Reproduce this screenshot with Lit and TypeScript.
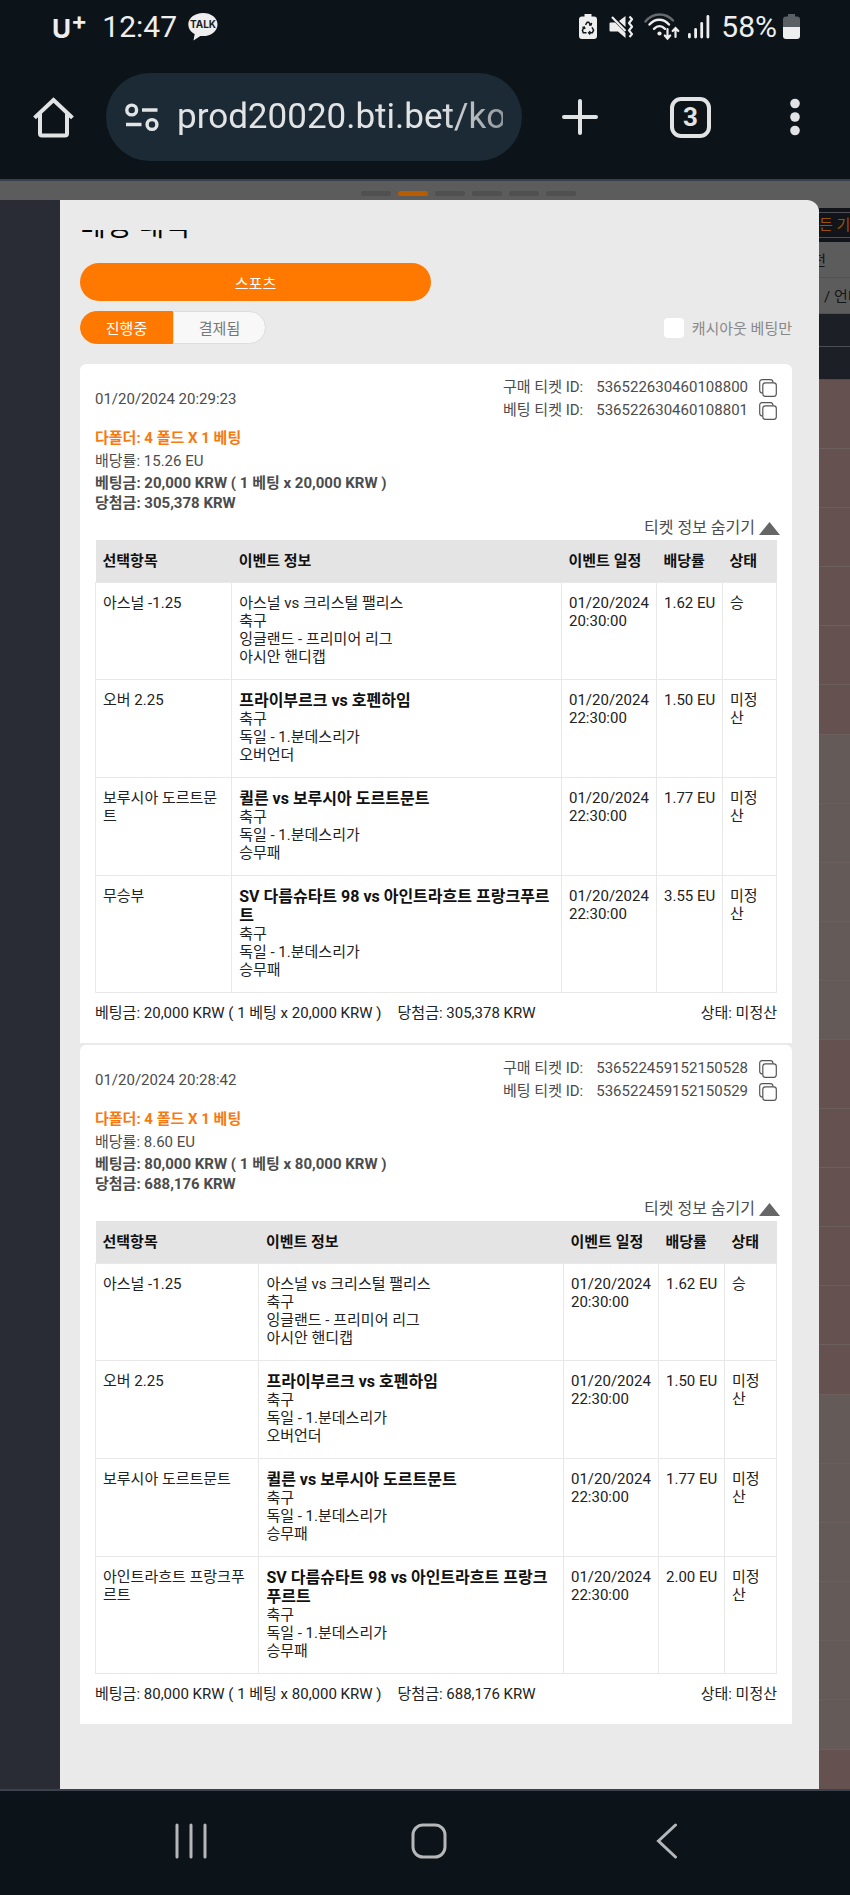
import { LitElement, html, css, svg } from 'lit';
import { customElement, property, state } from 'lit/decorators.js';
import { classMap } from 'lit/directives/class-map.js';

interface Selection {
  pick: string;
  event: string;
  live?: boolean;
  league: string;
  market: string;
  time: string;
  odds: string;
  status: string;
}

interface Ticket {
  date: string;
  purchaseId: string;
  betId: string;
  odds: string;
  stake: string;
  win: string;
  columns: string[];
  selections: Selection[];
}

const baseSelections: Selection[] = [
  {
    pick: '아스널 -1.25',
    event: '아스널 vs 크리스털 팰리스',
    league: '잉글랜드 - 프리미어 리그',
    market: '아시안 핸디캡',
    time: '20:30:00',
    odds: '1.62 EU',
    status: '승'
  },
  {
    pick: '오버 2.25',
    event: '프라이부르크 vs 호펜하임',
    live: true,
    league: '독일 - 1.분데스리가',
    market: '오버언더',
    time: '22:30:00',
    odds: '1.50 EU',
    status: '미정산'
  },
  {
    pick: '보루시아 도르트문트',
    event: '퀼른 vs 보루시아 도르트문트',
    live: true,
    league: '독일 - 1.분데스리가',
    market: '승무패',
    time: '22:30:00',
    odds: '1.77 EU',
    status: '미정산'
  }
];

const lastSelection = {
  event: 'SV 다름슈타트 98 vs 아인트라흐트 프랑크푸르트',
  live: true,
  league: '독일 - 1.분데스리가',
  market: '승무패',
  time: '22:30:00',
  status: '미정산'
};

const tickets: Ticket[] = [
  {
    date: '01/20/2024 20:29:23',
    purchaseId: '536522630460108800',
    betId: '536522630460108801',
    odds: '15.26 EU',
    stake: '20,000 KRW',
    win: '305,378 KRW',
    columns: ['20%', 'auto', '95px', '66px', '54px'],
    selections: [...baseSelections, { ...lastSelection, pick: '무승부', odds: '3.55 EU' }]
  },
  {
    date: '01/20/2024 20:28:42',
    purchaseId: '536522459152150528',
    betId: '536522459152150529',
    odds: '8.60 EU',
    stake: '80,000 KRW',
    win: '688,176 KRW',
    columns: ['24%', 'auto', '95px', '66px', '52px'],
    selections: [
      ...baseSelections,
      { ...lastSelection, pick: '아인트라흐트 프랑크푸르트', odds: '2.00 EU' }
    ]
  }
];

// number of rows in each tinted group of the market list behind the dialog
const marketGroups = [
  { rows: 6, hot: true },
  { rows: 5, hot: false },
  { rows: 6, hot: true },
  { rows: 6, hot: false },
  { rows: 1, hot: true }
];

@customElement('ticket-card')
class TicketCard extends LitElement {
  @property({ attribute: false }) ticket!: Ticket;
  @state() private _open = true;

  static styles = css`
    :host {
      display: block;
      padding: 12px 12px 19px;
      border-radius: 6px 6px 0 0;
      background: #fff;
      color: #4c4c4c;
      font-size: 15px;
      line-height: 23px;
    }
    button {
      display: flex;
      align-items: center;
      padding: 0;
      border: 0;
      background: none;
      color: inherit;
      font: inherit;
      cursor: pointer;
    }
    .head,
    .foot {
      display: flex;
      justify-content: space-between;
      align-items: center;
      padding: 0 3px;
    }
    .id-row {
      display: flex;
      align-items: center;
    }
    .id-label {
      margin-right: 13px;
    }
    .copy {
      margin-left: 11px;
    }
    .summary {
      padding: 5px 3px 4px;
    }
    .title {
      color: #f77a11;
      font-weight: 700;
    }
    .amount {
      font-weight: 700;
      line-height: 20px;
    }
    .toggle {
      gap: 4px;
      margin-left: auto;
      font-size: 16px;
      line-height: 22px;
    }
    .toggle.closed svg {
      transform: rotate(180deg);
    }
    .table-wrap {
      padding: 1px 3px 0;
    }
    table {
      width: 100%;
      table-layout: fixed;
      border-collapse: collapse;
      color: #222;
      line-height: 18px;
    }
    th {
      padding: 12px 6px 12px 7px;
      background: #e4e4e4;
      color: #111;
      font-weight: 700;
      text-align: left;
      white-space: nowrap;
    }
    td {
      padding: 11px 6px 13px 7px;
      border: 1px solid #e8e8e8;
      vertical-align: top;
    }
    .odds {
      white-space: nowrap;
    }
    .event.live {
      color: #111;
      font-size: 16px;
      font-weight: 700;
      line-height: 19px;
    }
    .foot {
      padding-top: 9px;
      color: #222;
      line-height: 22px;
    }
    .totals {
      display: flex;
      gap: 16px;
    }
  `;

  render() {
    const t = this.ticket;
    return html`
      <div class="head">
        <span>${t.date}</span>
        <div>
          ${this._renderId('구매 티켓 ID:', t.purchaseId)}
          ${this._renderId('베팅 티켓 ID:', t.betId)}
        </div>
      </div>
      <div class="summary">
        <div class="title">다폴더: 4 폴드 X 1 베팅</div>
        <div>배당률: ${t.odds}</div>
        <div class="amount">베팅금: ${t.stake} ( 1 베팅 x ${t.stake} )</div>
        <div class="amount">당첨금: ${t.win}</div>
      </div>
      <button
        class=${classMap({ toggle: true, closed: !this._open })}
        aria-expanded=${this._open}
        @click=${() => (this._open = !this._open)}
      >
        티켓 정보 숨기기
        <svg width="21" height="13" viewBox="0 0 21 13"><path d="M10.5 0L21 13H0Z" fill="#666" /></svg>
      </button>
      ${this._open ? this._renderTable() : ''}
      <div class="foot">
        <div class="totals">
          <span>베팅금: ${t.stake} ( 1 베팅 x ${t.stake} )</span>
          <span>당첨금: ${t.win}</span>
        </div>
        <span>상태: 미정산</span>
      </div>
    `;
  }

  private _renderId(label: string, id: string) {
    return html`
      <div class="id-row">
        <span class="id-label">${label}</span>
        <span>${id}</span>
        <button class="copy" aria-label="복사" @click=${() => navigator.clipboard?.writeText(id)}>
          <svg width="18" height="18" viewBox="0 0 18 18" fill="none" stroke="#555" stroke-width="1.2">
            <rect x="3.8" y="3.8" width="13.5" height="13.5" rx="2.5" />
            <path d="M3.8 14C1.5 14 .7 13 .7 11V3.2C.7 1.5 1.5 .7 3.2 .7H11.5C13.2 .7 14 1.5 14 3.6" />
          </svg>
        </button>
      </div>
    `;
  }

  private _renderTable() {
    return html`
      <div class="table-wrap">
        <table>
          <colgroup>
            ${this.ticket.columns.map((width) => html`<col style="width: ${width}" />`)}
          </colgroup>
          <thead>
            <tr>
              <th>선택항목</th>
              <th>이벤트 정보</th>
              <th>이벤트 일정</th>
              <th>배당률</th>
              <th>상태</th>
            </tr>
          </thead>
          <tbody>
            ${this.ticket.selections.map(
              (s) => html`
                <tr>
                  <td>${s.pick}</td>
                  <td>
                    <div class=${classMap({ event: true, live: !!s.live })}>${s.event}</div>
                    <div>축구</div>
                    <div>${s.league}</div>
                    <div>${s.market}</div>
                  </td>
                  <td>01/20/2024 ${s.time}</td>
                  <td class="odds">${s.odds}</td>
                  <td>${s.status}</td>
                </tr>
              `
            )}
          </tbody>
        </table>
      </div>
    `;
  }
}

@customElement('phone-status')
class PhoneStatus extends LitElement {
  static styles = css`
    :host {
      display: flex;
      align-items: center;
      height: 54px;
      padding: 0 50px 0 52px;
      color: #eee;
      font-size: 30px;
      line-height: 34px;
    }
    .carrier {
      display: flex;
      padding-top: 4px;
      font-family: Inter, sans-serif;
      font-size: 26px;
      font-weight: 700;
    }
    .plus {
      font-size: 24px;
      line-height: 18px;
    }
    .time {
      margin: 0 11px 0 15px;
    }
    .right {
      display: flex;
      align-items: center;
      margin-left: auto;
    }
    .mute {
      margin-left: 12px;
    }
    .wifi {
      margin-left: 9px;
    }
    .signal {
      margin: 0 11px 0 8px;
    }
    .battery {
      margin-left: 6px;
    }
    .talk {
      font: 700 10px Inter, sans-serif;
    }
  `;

  render() {
    return html`
      <span class="carrier">U<span class="plus">+</span></span>
      <span class="time">12:47</span>
      <svg width="30" height="28" viewBox="0 0 30 28">
        <path d="M15 0C6.7 0 .3 5 .3 11.3c0 4.200 2.500 7.800 6.400 9.800L5.500 27.500l6.800-4.600c.9.1 1.800.2 2.700.2 8.300 0 14.500-5.200 14.500-11.700S23.300 0 15 0z" fill="#eee" />
        <text class="talk" x="15" y="15" text-anchor="middle" fill="#1a1f24">TALK</text>
      </svg>
      <div class="right">
        <svg width="18" height="26" viewBox="0 0 18 26">
          <path d="M5.5 0h7v2.500H15a3 3 0 0 1 3 3V22a3 3 0 0 1-3 3H3a3 3 0 0 1-3-3V5.500a3 3 0 0 1 3-3h2.500z" fill="#eee" />
          <path d="M6.5 10.800L8.200 8.300h1.600l1.700 2.500M13 13.300l1.600 2.900-1.300 2.600h-3M7.500 18.800H4.300L3.400 16.200 5 13.300M10 10.900h2l.6-2M11.300 17.200L9.700 18.800l1.600 1.600M3.400 13.500l1.900-.4.7 1.900" fill="none" stroke="#11181e" stroke-width="1.500" />
        </svg>
        <svg class="mute" width="26" height="26" viewBox="0 0 26 26">
          <path d="M1.500 8.500h4.600l10.400 10.400V24L9 17.500H1.500a1 1 0 0 1-1-1v-7a1 1 0 0 1 1-1zM10 7l6.500-5v11z" fill="#eee" />
          <path d="M3 3L16.500 17M20.500 2.500l2.500 2.800-3 3.700 3 3.700-3 3.700 3 3.700-2.500 2.900" fill="none" stroke="#eee" stroke-width="2.200" stroke-linejoin="round" />
        </svg>
        <svg class="wifi" width="36" height="28" viewBox="0 0 36 28" fill="none" stroke-width="2.400" stroke-linecap="round">
          <path d="M1.500 8.500C9-.7 21.500-.7 29 7.500" stroke="#666b70" />
          <path d="M5.500 11.500c5.500-6.300 14-6.300 19.500 0M10 15.800c3.500-3.600 7.500-3.600 11 0" stroke="#eee" />
          <circle cx="15.500" cy="20.500" r="2.100" fill="#eee" />
          <path d="M23.500 16v9M20.800 22.500l2.700 3 2.700-3M31.500 24v-8.500M28.700 18l2.800-3 2.800 3" stroke="#eee" stroke-width="2.200" />
        </svg>
        <svg class="signal" width="22" height="24" viewBox="0 0 22 24" fill="#eee">
          <rect x="0" y="18" width="2.800" height="5.500" rx="1.400" />
          <rect x="6.200" y="13" width="2.800" height="10.500" rx="1.400" />
          <rect x="12.300" y="7" width="2.800" height="16.500" rx="1.400" />
          <rect x="18.500" y="0" width="2.800" height="23.500" rx="1.400" />
        </svg>
        <span>58%</span>
        <svg class="battery" width="17" height="26" viewBox="0 0 17 26">
          <path d="M5 0h7v2.500h2a3 3 0 0 1 3 3V13H0V5.500a3 3 0 0 1 3-3h2z" fill="#5b6064" />
          <path d="M0 13h17v9a3 3 0 0 1-3 3H3a3 3 0 0 1-3-3z" fill="#eee" />
        </svg>
      </div>
    `;
  }
}

@customElement('browser-bar')
class BrowserBar extends LitElement {
  static styles = css`
    :host {
      display: flex;
      align-items: center;
      padding: 19px 50px 18px 33px;
      border-bottom: 2px solid #38414c;
      color: #e1e3e5;
    }
    button {
      display: flex;
      padding: 0;
      border: 0;
      background: none;
      color: inherit;
    }
    .url-box {
      display: flex;
      flex: 1;
      align-items: center;
      gap: 18px;
      min-width: 0;
      height: 88px;
      margin: 0 40px 0 32px;
      padding: 0 19px;
      box-sizing: border-box;
      border-radius: 44px;
      background: #1b2a34;
    }
    .url {
      flex: 1;
      min-width: 0;
      padding: 0;
      border: 0;
      outline: 0;
      background: none;
      color: inherit;
      font: 35px/48px Roboto, sans-serif;
      mask-image: linear-gradient(to right, #000 80%, rgba(0, 0, 0, 0.6));
    }
    .tabs {
      justify-content: center;
      align-items: center;
      width: 41px;
      height: 41px;
      margin: 0 79px 0 72px;
      border: 4px solid #e1e3e5;
      border-radius: 11px;
      box-sizing: border-box;
      font: 700 26px/32px Roboto, sans-serif;
    }
  `;

  render() {
    return html`
      <button aria-label="홈">
        <svg width="41" height="41" viewBox="0 0 41 41" fill="none" stroke="currentColor" stroke-width="4" stroke-linecap="square">
          <path d="M3 19.500L20.500 3 38 19.500M7 18v18.500q0 2 2 2h23q2 0 2-2V18" />
        </svg>
      </button>
      <div class="url-box">
        <svg width="34" height="29" viewBox="0 0 34 29" fill="none" stroke="currentColor" stroke-width="3.400">
          <circle cx="6.700" cy="7" r="4.900" />
          <circle cx="27" cy="21.500" r="4.900" />
          <path d="M17 7h15.500M1 21.500h15.500" />
        </svg>
        <input class="url" type="text" aria-label="주소" value="prod20020.bti.bet/ko" />
      </div>
      <button aria-label="새 탭">
        <svg width="36" height="36" viewBox="0 0 36 36" stroke="currentColor" stroke-width="4" stroke-linecap="round">
          <path d="M18 2v32M2 18h32" />
        </svg>
      </button>
      <button class="tabs" aria-label="탭 3개">3</button>
      <button aria-label="메뉴">
        <svg width="10" height="38" viewBox="0 0 10 38" fill="currentColor">
          ${[5.5, 19, 32.5].map((y) => svg`<circle cx="5" cy=${y} r="4.8" />`)}
        </svg>
      </button>
    `;
  }
}

@customElement('app-root')
class AppRoot extends LitElement {
  @state() private _tab = 'open';

  static styles = css`
    :host {
      display: flex;
      flex-direction: column;
      min-height: 100vh;
      background: #0c1319;
      font-family: Roboto, 'Noto Sans CJK KR', sans-serif;
    }
    button {
      padding: 0;
      border: 0;
      font: inherit;
    }
    .page {
      display: grid;
      flex: 1;
      grid-template-columns: 60px minmax(0, 1fr) 31px;
      grid-template-rows: 19px 1fr;
      background: #5c5c5c;
    }
    .slides {
      display: flex;
      grid-column: 1 / -1;
      justify-content: center;
      gap: 7px;
      padding: 10px 0 0 87px;
    }
    .slide {
      width: 30px;
      height: 5px;
      border-radius: 3px;
      background: #505050;
    }
    .slide.active {
      background: #b85c00;
    }
    .rail {
      background: #292b35;
    }
    .dialog {
      padding: 30px 27px 20px 20px;
      border-radius: 0 12px 0 0;
      background: #eaeaea;
    }
    /* the heading is scrolled halfway under the dialog's top edge */
    .heading {
      display: flex;
      align-items: flex-end;
      height: 13px;
      margin-bottom: 20px;
      overflow: hidden;
    }
    h1 {
      margin: 0;
      font-size: 28px;
      font-weight: 400;
      line-height: 32px;
    }
    .kinds {
      display: grid;
      grid-template-columns: 1fr 1fr;
      gap: 10px;
      margin-bottom: 10px;
    }
    .kind {
      height: 38px;
      border-radius: 19px;
      background: #ff7800;
      color: #fff;
      font-size: 15px;
    }
    .filters {
      display: flex;
      justify-content: space-between;
      align-items: center;
      margin-bottom: 20px;
      font-size: 15px;
    }
    .tabs {
      display: flex;
    }
    .tab {
      width: 93px;
      height: 33px;
      border: 1px solid #ddd;
      background: #f8f8f8;
      color: #777;
    }
    .tab:first-child {
      border-radius: 17px 0 0 17px;
    }
    .tab:last-child {
      border-radius: 0 17px 17px 0;
    }
    .tab.active {
      border-color: #ff7800;
      background: #ff7800;
      color: #fff;
    }
    .cashout {
      display: flex;
      align-items: center;
      gap: 8px;
      color: #888;
    }
    .cashout input {
      width: 20px;
      height: 20px;
      margin: 0;
      border-radius: 4px;
      background: #fff;
      appearance: none;
    }
    .cashout input:checked {
      background: #ff7800;
    }
    .tickets {
      display: flex;
      flex-direction: column;
      gap: 2px;
    }
    .behind {
      display: flex;
      flex-direction: column;
      padding-top: 8px;
      overflow: hidden;
      color: #151515;
      font-size: 15px;
      white-space: nowrap;
    }
    .period {
      padding: 4px 0;
      background: #111419;
      color: #9a500a;
      line-height: 24px;
    }
    .period-text {
      border: solid #4d5157;
      border-width: 1px 0;
    }
    .cell {
      display: flex;
      align-items: center;
      height: 36px;
      padding-left: 5px;
      border-bottom: 1px solid #515151;
      box-sizing: border-box;
    }
    .cell.half {
      justify-content: flex-end;
      padding: 0 24px 0 0;
    }
    .bar {
      height: 33px;
      border-bottom: 1px solid #4b4d52;
      box-sizing: border-box;
      background: #1d1f26;
    }
    .group {
      background: #645b59;
    }
    .group.hot {
      background: #645150;
    }
    .group:last-child {
      flex: 1;
    }
    .row {
      height: 59px;
      border-bottom: 1px solid #6b5f5d;
      box-sizing: border-box;
    }
    .row:first-child {
      height: 69px;
    }
    .row:nth-child(6) {
      height: 50px;
    }
    .group:last-child .row {
      height: auto;
      border: 0;
    }
    .nav {
      display: grid;
      grid-template-columns: 1fr 1fr 1fr;
      place-items: center;
      height: 100px;
      padding: 0 64px 4px 72px;
      border-top: 2px solid #3b424c;
    }
    .nav button {
      display: flex;
      background: none;
      color: #b5b7b9;
    }
  `;

  render() {
    return html`
      <phone-status></phone-status>
      <browser-bar></browser-bar>
      <div class="page">
        <div class="slides">
          ${[0, 1, 2, 3, 4, 5].map(
            (i) => html`<span class=${classMap({ slide: true, active: i === 1 })}></span>`
          )}
        </div>
        <div class="rail"></div>
        <main class="dialog">
          <div class="heading"><h1>베팅 내역</h1></div>
          <div class="kinds"><button class="kind">스포츠</button></div>
          <div class="filters">
            <div class="tabs">${this._renderTab('open', '진행중')}${this._renderTab('settled', '결제됨')}</div>
            <label class="cashout"><input type="checkbox" />캐시아웃 베팅만</label>
          </div>
          <div class="tickets">
            ${tickets.map((ticket) => html`<ticket-card .ticket=${ticket}></ticket-card>`)}
          </div>
        </main>
        <div class="behind">
          <div class="period"><div class="period-text">든 기간</div></div>
          <div class="cell half">전</div>
          <div class="cell">/ 언더</div>
          <div class="bar"></div>
          <div class="bar"></div>
          ${marketGroups.map(
            (group) => html`
              <div class=${classMap({ group: true, hot: group.hot })}>
                ${Array.from({ length: group.rows }, () => html`<div class="row"></div>`)}
              </div>
            `
          )}
        </div>
      </div>
      <nav class="nav">
        <button aria-label="최근 앱">
          <svg width="34" height="36" viewBox="0 0 34 36" stroke="currentColor" stroke-width="3" stroke-linecap="round">
            <path d="M3 2v32M17 2v32M31 2v32" />
          </svg>
        </button>
        <button aria-label="홈">
          <svg width="36" height="36" viewBox="0 0 36 36" fill="none" stroke="currentColor" stroke-width="3">
            <rect x="2" y="2" width="32" height="32" rx="10" />
          </svg>
        </button>
        <button aria-label="뒤로">
          <svg width="22" height="36" viewBox="0 0 22 36" fill="none" stroke="currentColor" stroke-width="3" stroke-linecap="round">
            <path d="M19.500 2L2.500 18l17 16" />
          </svg>
        </button>
      </nav>
    `;
  }

  private _renderTab(id: string, label: string) {
    return html`
      <button
        class=${classMap({ tab: true, active: this._tab === id })}
        aria-pressed=${this._tab === id}
        @click=${() => (this._tab = id)}
      >${label}</button>
    `;
  }
}
